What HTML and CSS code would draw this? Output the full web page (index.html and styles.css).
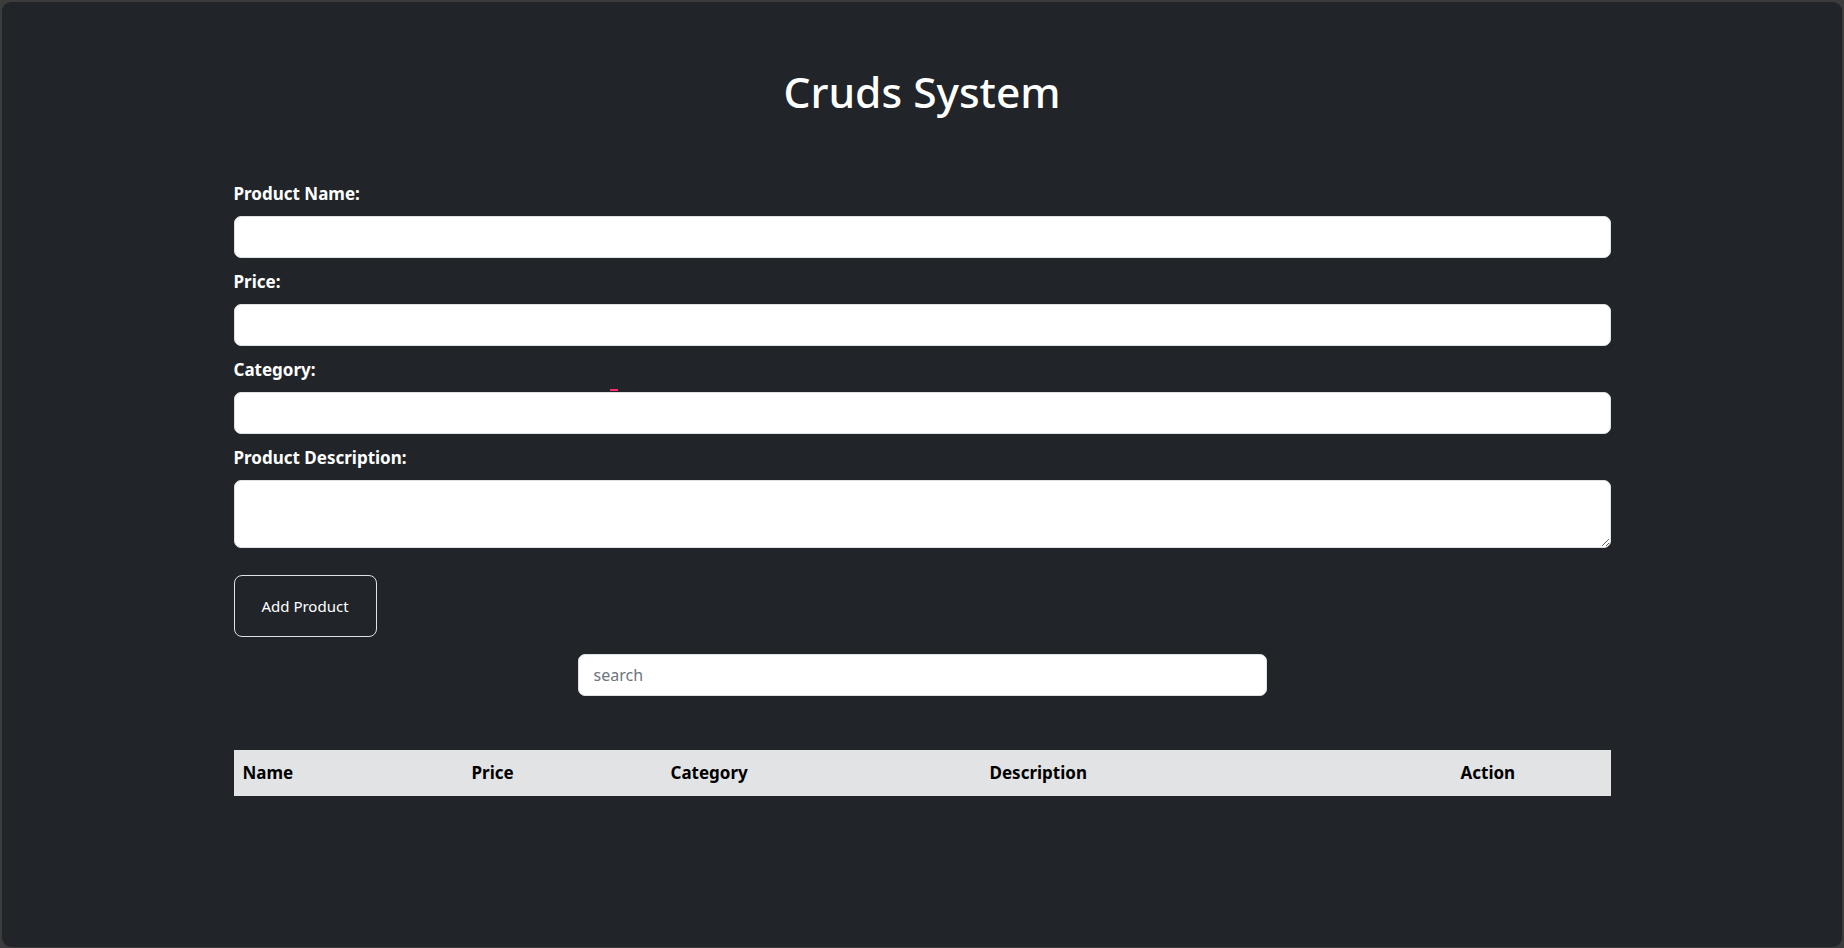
FILE: index.html
```html
<!DOCTYPE html>
<html lang="en">
<head>
<meta charset="utf-8">
<title>Cruds System</title>
<link rel="stylesheet" href="styles.css">
</head>
<body>
<div class="frame">
  <span class="cursor-mark"></span>
  <div class="container">
    <h1 class="title">Cruds System</h1>
    <form class="product-form">
      <label class="field-label" for="pname">Product Name:</label>
      <input class="field" id="pname" type="text">
      <label class="field-label" for="price">Price:</label>
      <input class="field" id="price" type="text">
      <label class="field-label" for="cat">Category:</label>
      <input class="field" id="cat" type="text">
      <label class="field-label" for="desc">Product Description:</label>
      <textarea class="field field-area" id="desc"></textarea>
      <div class="actions">
        <button type="button" class="btn-add">Add Product</button>
      </div>
    </form>
    <div class="search-row">
      <input class="search" type="text" placeholder="search">
    </div>
    <table class="products">
      <thead>
        <tr>
          <th class="c-name">Name</th>
          <th class="c-price">Price</th>
          <th class="c-cat">Category</th>
          <th class="c-desc">Description</th>
          <th class="c-act">Action</th>
        </tr>
      </thead>
      <tbody></tbody>
    </table>
  </div>
</div>
</body>
</html>
```
FILE: styles.css
```css
* { box-sizing: border-box; }
html, body { height: 100%; }
body {
  margin: 0;
  background: #3c3c3c;
  font-family: "Noto Sans", "Open Sans", sans-serif;
  overflow: hidden;
}
.frame {
  position: relative;
  margin: 2px 2px 1px 2px;
  height: calc(100vh - 3px);
  background: #212529;
  border-radius: 9px;
  color: #fff;
}
.cursor-mark {
  position: absolute;
  left: 608px;
  top: 387px;
  width: 8px;
  height: 2px;
  background: #ff2d6f;
}
.container {
  width: 1377px;
  margin: 0 auto;
  padding-top: 63px;
}
.title {
  margin: 0;
  text-align: center;
  font-size: 42.5px;
  font-weight: 500;
  line-height: 53px;
  color: #fff;
}
.product-form {
  display: flex;
  flex-direction: column;
  margin-top: 63px;
}
.field-label {
  font-size: 17px;
  font-weight: 700;
  line-height: 26px;
  margin-bottom: 9px;
  color: #fff;
}
.field {
  display: block;
  width: 100%;
  height: 42px;
  margin: 0 0 11px 0;
  border: 1px solid #dee2e6;
  border-radius: 7px;
  background: #fff;
  font-family: inherit;
  font-size: 16px;
}
.field-area {
  height: 68px;
  margin-bottom: 0;
  resize: vertical;
}
.actions {
  margin-top: 27px;
}
.btn-add {
  width: 143px;
  height: 62px;
  background: transparent;
  border: 1px solid #dee2e6;
  border-radius: 8px;
  color: #fff;
  font-family: inherit;
  font-size: 15px;
  padding: 0;
}
.search-row {
  display: flex;
  justify-content: center;
  margin-top: 17px;
}
.search {
  width: 689px;
  height: 42px;
  border: 1px solid #dee2e6;
  border-radius: 7px;
  background: #fff;
  padding: 0 15px;
  font-family: inherit;
  font-size: 16px;
  color: #212529;
}
.search::placeholder { color: #6c757d; }
.products {
  width: 100%;
  margin-top: 54px;
  border-collapse: collapse;
  table-layout: fixed;
}
.products th {
  background: #e2e3e5;
  color: #000;
  text-align: left;
  font-size: 17px;
  font-weight: 700;
  line-height: 26px;
  padding: 10px 9px;
}
.c-name { width: 229px; }
.c-price { width: 199px; }
.c-cat { width: 319px; }
.c-desc { width: 471px; }
.c-act { width: 159px; }
```
